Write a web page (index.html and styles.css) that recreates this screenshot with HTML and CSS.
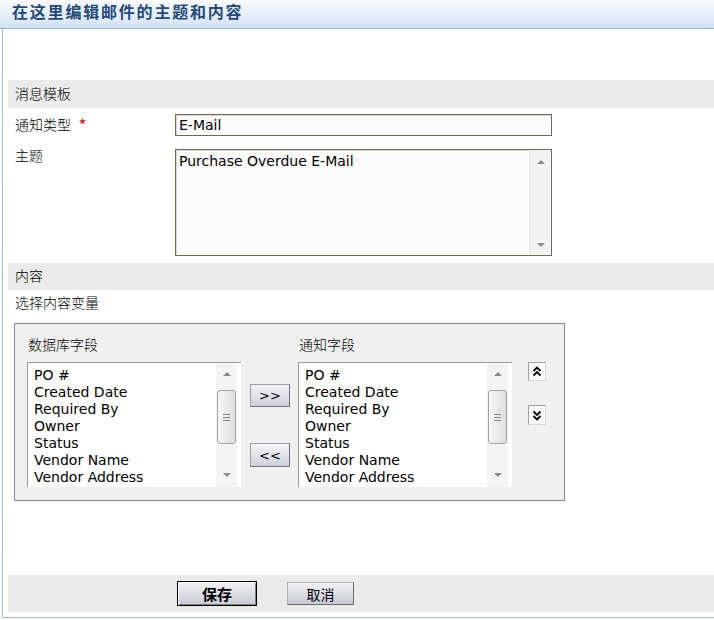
FILE: index.html
```html
<!DOCTYPE html>
<html lang="zh-CN">
<head>
    <meta charset="UTF-8">
    <title>编辑邮件</title>
    <link rel="stylesheet" href="styles.css">
</head>
<body>
    <div class="title-bar">在这里编辑邮件的主题和内容</div>

    <div class="panel">
        <div class="spacer"></div>

        <div class="section-head">消息模板</div>

        <div class="form-row first">
            <label class="form-label">通知类型 <span class="required">*</span></label>
            <input class="text-input" type="text" value="E-Mail">
        </div>

        <div class="form-row">
            <label class="form-label top">主题</label>
            <div class="text-area">
                <textarea>Purchase Overdue E-Mail</textarea>
                <div class="vscroll">
                    <span class="arrow up"></span>
                    <span class="track"></span>
                    <span class="arrow down"></span>
                </div>
            </div>
        </div>

        <div class="section-head second">内容</div>
        <div class="plain-line">选择内容变量</div>

        <div class="field-box">
            <div class="field-col">
                <div class="col-title">数据库字段</div>
                <div class="list-box">
                    <ul>
                        <li>PO #</li>
                        <li>Created Date</li>
                        <li>Required By</li>
                        <li>Owner</li>
                        <li>Status</li>
                        <li>Vendor Name</li>
                        <li>Vendor Address</li>
                    </ul>
                    <div class="vscroll list">
                        <span class="arrow up"></span>
                        <span class="thumb"><i></i><i></i><i></i></span>
                        <span class="track"></span>
                        <span class="arrow down"></span>
                    </div>
                </div>
            </div>

            <div class="move-col">
                <button class="move-btn">&gt;&gt;</button>
                <button class="move-btn back">&lt;&lt;</button>
            </div>

            <div class="field-col">
                <div class="col-title">通知字段</div>
                <div class="list-box">
                    <ul>
                        <li>PO #</li>
                        <li>Created Date</li>
                        <li>Required By</li>
                        <li>Owner</li>
                        <li>Status</li>
                        <li>Vendor Name</li>
                        <li>Vendor Address</li>
                    </ul>
                    <div class="vscroll list">
                        <span class="arrow up"></span>
                        <span class="thumb"><i></i><i></i><i></i></span>
                        <span class="track"></span>
                        <span class="arrow down"></span>
                    </div>
                </div>
            </div>

            <div class="order-col">
                <span class="order-btn">
                    <svg width="10" height="11" viewBox="0 0 10 11"><path d="M1.5 5 L5 1.5 L8.5 5 M1.5 9.5 L5 6 L8.5 9.5" fill="none" stroke="#000" stroke-width="1.8"/></svg>
                </span>
                <span class="order-btn down">
                    <svg width="10" height="11" viewBox="0 0 10 11"><path d="M1.5 1.5 L5 5 L8.5 1.5 M1.5 6 L5 9.5 L8.5 6" fill="none" stroke="#000" stroke-width="1.8"/></svg>
                </span>
            </div>
        </div>

        <div class="button-bar">
            <button class="form-btn save">保存</button>
            <button class="form-btn">取消</button>
        </div>
    </div>
</body>
</html>
```

FILE: styles.css
```css
* {
    margin: 0;
    padding: 0;
    box-sizing: border-box;
}

body {
    font-family: 'DejaVu Sans', Verdana, 'Noto Sans CJK SC', sans-serif;
    font-size: 14px;
    color: #000;
    background: #fff;
}

.title-bar {
    height: 29px;
    padding-left: 12px;
    line-height: 23px;
    font-family: 'Noto Sans CJK SC', sans-serif;
    font-size: 16px;
    font-weight: bold;
    letter-spacing: 1.8px;
    color: #244a7c;
    background: linear-gradient(to bottom, #f9fbfd 0%, #d2e1f0 100%);
    border-bottom: 1px solid #90b3d2;
}

.panel {
    margin-left: 2px;
    height: 589px;
    padding-left: 5px;
    border-left: 1px solid #a3bdd5;
    border-bottom: 1px solid #a3bdd5;
}

.spacer {
    height: 51px;
}

.section-head {
    height: 28px;
    line-height: 27px;
    padding-left: 7px;
    background: #ebebeb;
    font-family: 'Noto Sans CJK SC', sans-serif;
    font-weight: 300;
}

.section-head.second {
    height: 27px;
    line-height: 25px;
}

.form-row {
    display: flex;
    align-items: center;
    margin-top: 13px;
}

.form-row.first {
    margin-top: 6px;
}

.form-row:last-of-type {
    margin-bottom: 7px;
}

.form-label {
    width: 167px;
    padding-left: 7px;
    margin-top: -2px;
    font-family: 'Noto Sans CJK SC', sans-serif;
    font-weight: 300;
}

.form-label.top {
    align-self: flex-start;
    margin-top: -4px;
}

.required {
    color: #e0201c;
    font-weight: bold;
    margin-left: 5px;
}

.text-input {
    width: 377px;
    height: 22px;
    padding: 0 3px;
    font-family: 'DejaVu Sans', Verdana, sans-serif;
    font-size: 14px;
    background: #fbfbfb;
    border: 1px solid #6b6b58;
    box-shadow: inset 1px 1px 0 #d8d8d0;
    outline: none;
}

.text-area {
    display: flex;
    width: 377px;
    height: 107px;
    margin-bottom: 7px;
    background: #fcfcfc;
    border: 1px solid #6b6b58;
    box-shadow: inset 1px 1px 0 #d8d8d0;
}

.text-area textarea {
    flex: 1;
    padding: 3px 3px;
    border: none;
    background: transparent;
    font-family: 'DejaVu Sans', Verdana, sans-serif;
    font-size: 14px;
    resize: none;
    outline: none;
    overflow: hidden;
}

.vscroll {
    display: flex;
    flex-direction: column;
    align-items: center;
    width: 22px;
    padding: 10px 0 8px;
    background: #f2f2f2;
    border-left: 1px solid #e6e6e6;
}

.vscroll .track {
    flex: 1;
}

.arrow {
    width: 0;
    height: 0;
    border-left: 4px solid transparent;
    border-right: 4px solid transparent;
}

.arrow.up {
    border-bottom: 4px solid #8a8a8a;
}

.arrow.down {
    border-top: 4px solid #8a8a8a;
}

.plain-line {
    height: 26px;
    line-height: 25px;
    padding-left: 7px;
    font-family: 'Noto Sans CJK SC', sans-serif;
    font-weight: 300;
}

.field-box {
    display: flex;
    width: 551px;
    height: 178px;
    margin: 7px 0 0 6px;
    padding: 11px 0 0 12px;
    background: #f0f0f0;
    border: 1px solid #8c8c84;
}

.field-col {
    width: 214px;
}

.col-title {
    height: 18px;
    line-height: 18px;
    padding-left: 1px;
    margin-bottom: 9px;
    font-family: 'Noto Sans CJK SC', sans-serif;
    font-weight: 300;
}

.list-box {
    display: flex;
    height: 125px;
    background: #fff;
    border-top: 1px solid #9a9a9a;
    border-left: 1px solid #9a9a9a;
}

.list-box ul {
    flex: 1;
    list-style: none;
    padding: 4px 0 0 6px;
    line-height: 17px;
    overflow: hidden;
}

.vscroll.list {
    width: 21px;
    margin-right: 4px;
    padding: 9px 0 10px;
    background: #f4f4f4;
    border-left: none;
}

.thumb {
    display: flex;
    flex-direction: column;
    align-items: center;
    justify-content: center;
    gap: 2px;
    width: 19px;
    height: 54px;
    margin-top: 14px;
    background: linear-gradient(to right, #f6f6f6, #dedede);
    border: 1px solid #a4a4a4;
    border-radius: 3px;
}

.thumb i {
    display: block;
    width: 7px;
    height: 1px;
    background: #888;
}

.move-col {
    display: flex;
    flex-direction: column;
    align-items: flex-start;
    width: 40px;
    margin: 0 8px 0 9px;
    padding-top: 49px;
}

.move-btn {
    width: 40px;
    height: 23px;
    font-family: 'DejaVu Sans', Verdana, sans-serif;
    font-size: 13px;
    color: #000;
    background: linear-gradient(to bottom, #f4f4f8, #cfcfd9);
    border: 1px solid #9c9ca4;
    border-right-color: #707078;
    border-bottom-color: #707078;
}

.move-btn.back {
    height: 24px;
    margin-top: 36px;
}

.order-col {
    display: flex;
    flex-direction: column;
    margin-left: 16px;
    padding-top: 27px;
}

.order-btn {
    display: flex;
    align-items: center;
    justify-content: center;
    width: 18px;
    height: 19px;
    background: #fafafa;
    border: 1px solid #a0a0a0;
    border-right-color: #dcdcdc;
    border-bottom-color: #dcdcdc;
}

.order-btn.down {
    height: 20px;
    margin-top: 24px;
}

.button-bar {
    display: flex;
    align-items: center;
    gap: 30px;
    height: 37px;
    margin-top: 74px;
    padding-left: 169px;
    background: #ebebeb;
}

.form-btn {
    width: 67px;
    height: 23px;
    font-family: 'Noto Sans CJK SC', sans-serif;
    font-size: 14px;
    color: #000;
    background: linear-gradient(to bottom, #f2f2f6, #c9c9d3);
    border: 1px solid #b4b4bc;
    border-right-color: #6c6c74;
    border-bottom-color: #6c6c74;
}

.form-btn.save {
    width: 80px;
    height: 25px;
    font-size: 15px;
    font-weight: bold;
    border: 1px solid #000;
    box-shadow: inset 1px 1px 0 #fff, inset -1px -1px 0 #808088;
}
```
